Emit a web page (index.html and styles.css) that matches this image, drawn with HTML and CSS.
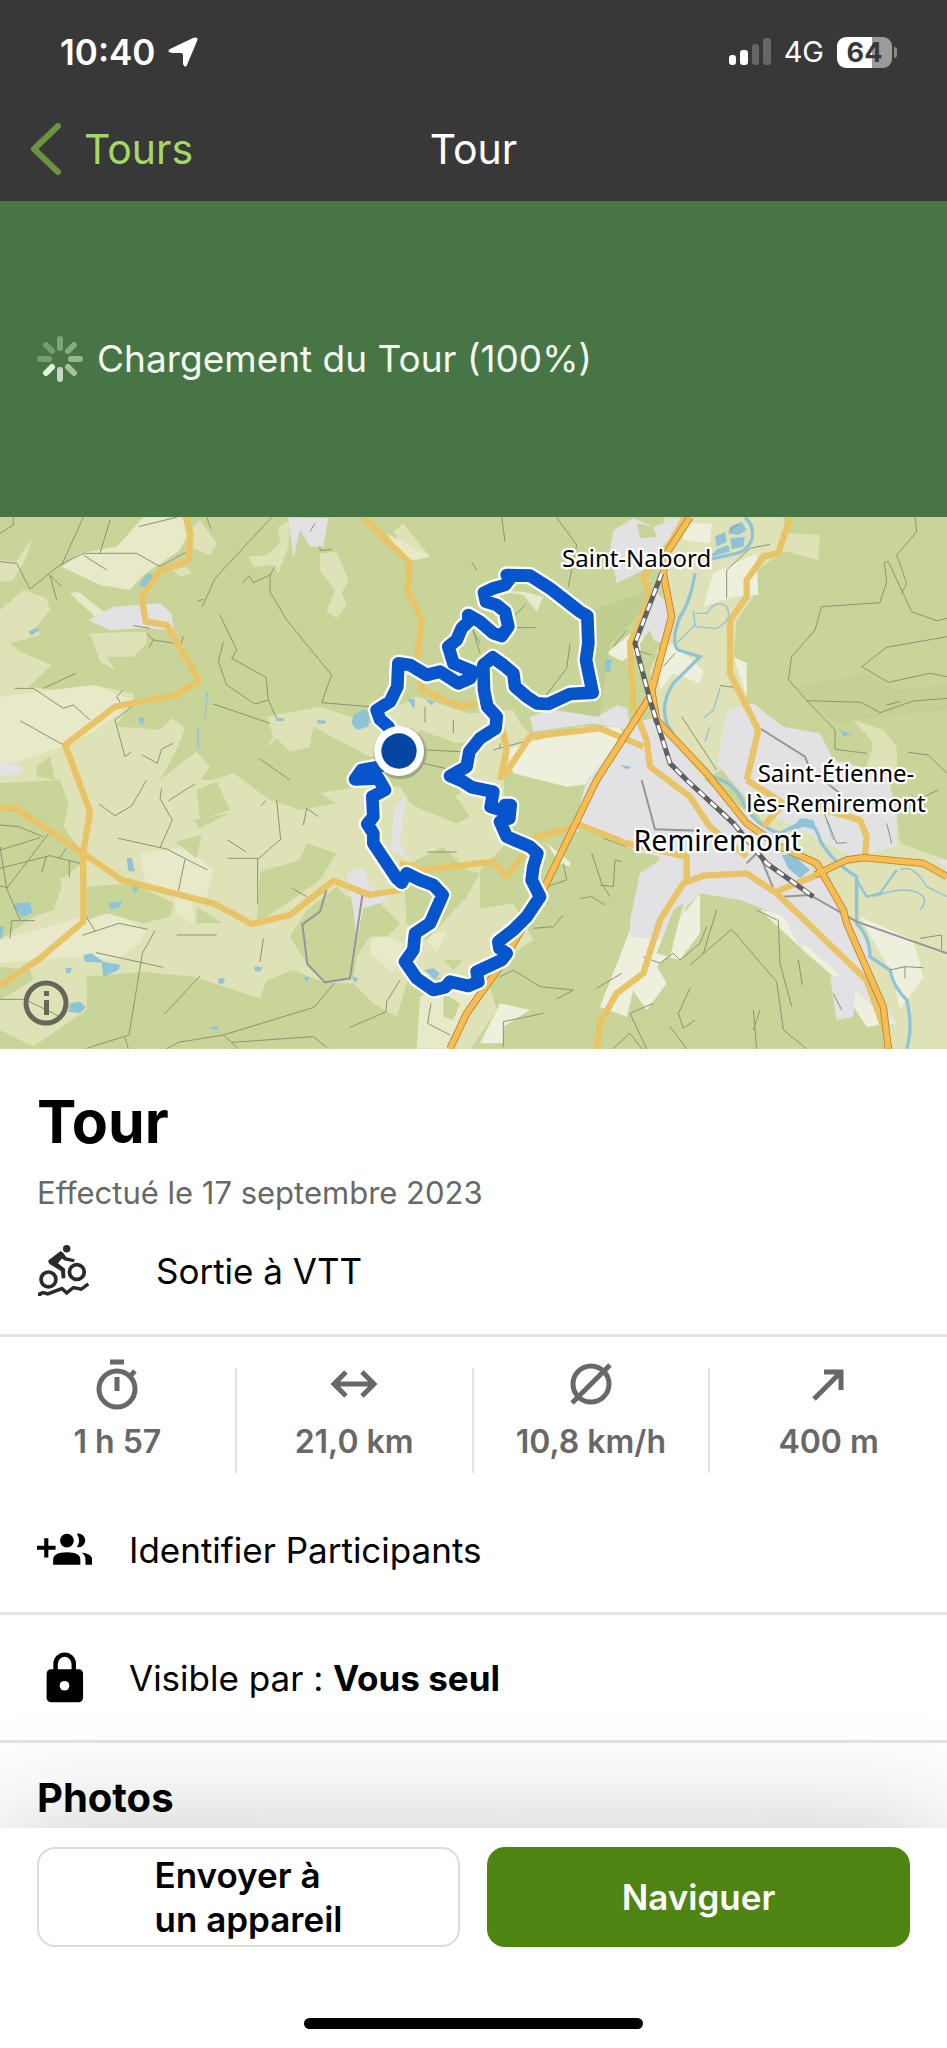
FILE: index.html
```html
<!DOCTYPE html>
<html lang="fr">
<head>
    <meta charset="UTF-8">
    <meta name="viewport" content="width=device-width, initial-scale=1.0">
    <title>Tour</title>
    <link rel="stylesheet" href="styles.css">
</head>
<body>
    <header class="header">
        <div class="status-bar">
            <div class="status-left">
                <span class="time">10:40</span>
                <svg class="location-icon" viewBox="0 0 30 30"><path d="M29 4 19 28Q17 32 15 27V18Q15 16 13 16H4Q-2 15 2 12L25 1Q31-1 29 4Z" fill="#fff"/></svg>
            </div>
            <div class="status-right">
                <svg class="signal-icon" viewBox="0 0 42 28">
                    <rect x="0" y="17" width="7" height="10" rx="3" fill="#fff"/>
                    <rect x="11" y="12" width="8" height="15" rx="3" fill="#fff"/>
                    <rect x="23" y="6" width="7" height="21" rx="3" fill="#666"/>
                    <rect x="34" y="0" width="8" height="27" rx="3" fill="#666"/>
                </svg>
                <span class="network">4G</span>
                <span class="battery">64</span>
            </div>
        </div>
        <nav class="nav-bar">
            <a class="back-link" href="#">
                <svg class="back-icon" viewBox="0 0 32 52"><path d="M28 3 4 26 28 49" fill="none" stroke="#6b9440" stroke-width="6" stroke-linecap="round" stroke-linejoin="round"/></svg>
                Tours
            </a>
            <span class="nav-title">Tour</span>
        </nav>
    </header>

    <div class="loading">
        <svg class="spinner" viewBox="-23 -23 46 46" stroke="#e4f5e0" stroke-width="6" stroke-linecap="round">
            <path d="M0-11V-20" opacity=".35"/>
            <path d="M8-8 14-14" opacity=".4"/>
            <path d="M11 0H20" opacity=".5"/>
            <path d="M8 8 14 14" opacity=".6"/>
            <path d="M0 11V20" opacity=".8"/>
            <path d="M-8 8-14 14"/>
            <path d="M-11 0H-20" opacity=".3"/>
            <path d="M-8-8-14-14" opacity=".3"/>
        </svg>
        <span>Chargement du Tour (100%)</span>
    </div>

    <div class="map">
        <svg class="map-canvas" viewBox="0 21 2841 1596" preserveAspectRatio="xMidYMid slice">
            <rect y="21" width="2841" height="1596" fill="#c9d598"/>

            <!-- fields, west -->
            <g fill="#dfe2b6">
                <path d="M0 300 70 240 140 265 150 300 110 350 120 375 30 400 60 425 155 465 85 530 160 540 280 525 400 550 405 570 345 650 430 655 480 660 515 625 555 655 530 720 480 810 590 725 630 770 600 810 640 810 700 790 810 870 900 900 1010 880 960 850 1050 835 1120 830 1200 830 1230 880 1310 910 1300 860 1440 850 1440 1040 1200 1060 1380 1050 1440 1080V1420L1230 1390 1190 1520 1120 1480 1060 1420 980 1420 880 1380 800 1410 780 1465 580 1400 430 1385 260 1400 260 1500 100 1610 0 1560Z"/>
                <path d="M270 370 440 365 440 400 400 440 320 440 345 480 300 455Z"/>
                <path d="M960 130 1010 125 1045 210 1025 250 1040 285 1010 325 980 305 1005 240 960 180Z"/>
                <path d="M870 30 865 110 835 190 820 165 760 170 745 140 800 135 840 100 835 50Z"/>
                <path d="M1180 65 1210 40 1290 140 1230 150Z"/>
                <path d="M0 150 50 155 95 85 80 140 40 210 0 215Z"/>
                <path d="M600 30 650 100 630 135 580 115 560 70Z"/>
                <path d="M520 180 560 170 575 190 540 200Z"/>
                <path d="M800 620 960 590 1110 640 1150 610 1250 560 1440 620 1440 690 1370 700 1260 660 1200 740 1110 740 940 650 930 710 870 725 830 685 800 715 820 680Z"/>
                <path d="M1410 610 1540 600 1560 640 1620 700 1510 790 1520 1000 1440 1080H1380V820Z"/>
                <path d="M1420 1200 1540 1180 1600 1290 1420 1410Z"/>
                <path d="M1420 1400 1470 1430 1490 1500 1410 1620H1340Z"/>
            </g>
            <g fill="#e7e9c8">
                <path d="M185 170 240 130 350 110 430 22H550L560 80 540 120 430 195 390 240 300 225Z"/>
                <path d="M0 560 120 545 280 525 400 570 290 660 190 710 0 770Z"/>
                <path d="M0 1290 250 1220 330 1200 440 1260 420 1300 350 1350 200 1340 0 1360Z"/>
                <path d="M420 1030 560 1010 640 1080 620 1160 560 1170 440 1140Z"/>
                <path d="M210 250 235 245 330 320 290 325Z"/>
                <path d="M1120 1260 1210 1300 1180 1390 1110 1330Z"/>
                <path d="M1260 1460 1320 1430 1430 1440 1340 1616H1250Z"/>
                <path d="M1470 240 1570 245 1630 260 1610 305 1570 255Z"/>
                <path d="M1270 1280 1340 1260 1310 1330Z"/>
                <path d="M520 1160 575 1170 585 1245 530 1210Z"/>
                <path d="M1160 70 1290 140 1220 155Z"/>
            </g>
            <!-- woods inside the fields -->
            <g fill="#c9d598">
                <path d="M0 900 0 820 180 810 205 880 190 950 240 1020 250 1060 180 1110 185 1130 160 1200 100 1220 0 1290Z"/>
                <path d="M260 1130 400 1120 520 1180 510 1220 430 1240 320 1210 260 1230Z"/>
                <path d="M780 1085 900 1050 920 1000 1010 1030 960 1110 860 1180 770 1240Z"/>
                <path d="M525 995 605 975 590 1045Z"/>
                <path d="M580 930 690 910 600 955Z M590 840 650 815 690 900 600 930Z"/>
                <path d="M590 1190 670 1240 590 1240Z"/>
                <path d="M870 1280 920 1200 1010 1130 1040 1160 1110 1150 1200 1240 1160 1280 1110 1280 1070 1340 1060 1400 980 1415 925 1370Z"/>
                <path d="M1230 830 1340 820 1410 920 1370 940 1270 900 1230 880Z"/>
                <path d="M1210 1070 1330 1010 1400 1080 1440 1090 1400 1160 1280 1290 1220 1240Z"/>
                <path d="M0 1370 90 1380 100 1410 0 1470Z"/>
                <path d="M110 770 150 740 165 810 110 800Z"/>
                <path d="M1330 1350 1390 1350 1360 1380Z M1330 1450 1380 1480 1360 1530 1330 1520Z"/>
            </g>

            <!-- valley, east -->
            <g fill="#dfe2b6">
                <path d="M1990 22H2350L2360 120 2270 180 2260 260 2210 330 2200 450 2240 500 2240 590 2180 620 2200 760 2110 810 2030 740 1960 600 1950 480 2020 330 2000 200Z"/>
                <path d="M2360 70 2460 75 2455 150 2340 120Z"/>
                <path d="M2240 870 2380 890 2500 900 2690 920 2700 1000 2841 1050V1616H2680L2600 1400 2480 1150 2380 1060Z"/>
                <path d="M2560 630 2650 660 2690 710 2690 800 2600 770 2620 700Z"/>
                <path d="M2140 22 2180 22 2130 90 2060 90Z"/>
            </g>
            <g fill="#efefdd">
                <path d="M1880 380 2000 270 1990 360 1880 460 1820 430Z"/>
                <path d="M1970 420 2020 400 2110 480 2100 520 2020 490 1980 540Z"/>
                <path d="M2050 40 2135 40 2130 100 2050 90Z"/>
                <path d="M2140 190 2270 130 2275 255 2200 260 2110 290Z"/>
                <path d="M2200 440 2240 460 2240 560Z"/>
                <path d="M1520 720 1740 650 1860 650 1900 740 1860 810 1700 830 1540 790Z"/>
                <path d="M1890 1260 2060 1200 2100 1150 2100 1270 2040 1350 2000 1340 1900 1440 1880 1520 1800 1490Z"/>
                <path d="M1840 1410 1960 1350 2000 1420 1940 1500 1870 1400Z"/>
                <path d="M2280 1200 2360 1210 2510 1370 2630 1500 2690 1540 2600 1550 2500 1400 2420 1330Z"/>
                <path d="M2580 1220 2740 1290 2770 1400 2700 1500 2680 1400Z"/>
                <path d="M1500 1480 1590 1500 1510 1550 1510 1600 1440 1600Z"/>
                <path d="M1640 1000 1740 1080 1680 1060Z"/>
            </g>
            <g fill="#e2e1e3">
                <path d="M1840 60 1900 25 1960 50 2040 22 2010 120 1950 170 1850 220 1830 120Z"/>
                <path d="M1960 240 2020 290 1990 400 1920 380Z"/>
                <path d="M1760 810 1860 690 1890 640 1980 620 2100 800 2300 950 2400 1040 2480 1130 2500 1180 2500 1280 2400 1310 2350 1220 2220 1170 2100 1150 2060 1190 2000 1290 1890 1280 1890 1210 1920 1080 1980 1040 1890 1020 1720 960Z"/>
                <path d="M1590 620 1660 595 1790 620 1880 570 1890 660 1780 640 1600 665Z"/>
                <path d="M2180 600 2260 580 2350 650 2460 670 2500 750 2660 790 2690 900 2690 1010 2560 1040 2400 960 2250 880 2150 760Z"/>
                <path d="M2340 1160 2500 1160 2600 1300 2620 1410 2690 1540 2630 1500 2480 1360 2400 1290Z"/>
                <path d="M2490 1400 2570 1390 2560 1520 2510 1530Z"/>
                <path d="M340 290 480 280 515 310 520 360 430 355 330 360 265 330Z"/>
                <path d="M865 22 985 25 970 110 930 110 900 60 880 145Z"/>
                <path d="M0 755 70 770 60 790 0 800Z"/>
                <path d="M1040 1090 1090 1070 1110 1130 1170 1170 1090 1195 1070 1290 1060 1200Z"/>
                <path d="M1185 890 1220 850 1200 1000 1230 1050 1170 1020Z"/>
                <path d="M2800 1045 2841 1050V1075Z"/>
            </g>
            <g fill="#bdca8d">
                <path d="M1780 300 1980 230 1900 330 1830 400 1800 620 1660 600 1770 560Z" opacity=".8"/>
                <path d="M2380 530 2600 490 2690 540 2841 520V600L2640 620 2500 640Z" opacity=".35"/>
            </g>
            <g fill="#c9d598">
                <path d="M1740 950 1880 1010 1980 1050 1920 1090 1890 1230 1790 1300 1700 1100Z"/>
                <path d="M2050 1180 2010 1340 1970 1330 2020 1200Z"/>
                <path d="M1870 450 1920 430 1890 600 1820 570Z"/>
                <path d="M1910 40 1960 50 1970 80 1920 85Z"/>
                <path d="M1970 420 1950 360 1920 400 1930 530Z"/>
            </g>

            <!-- water -->
            <g fill="#8fc4d8">
                <path d="M425 210 445 190 460 195 440 230 418 230Z M85 365 110 352 118 360 95 377Z M420 620 432 625 430 645 415 635Z"/>
                <path d="M830 623 852 624 850 633 828 632Z M950 630 978 632 975 642 952 640Z M1060 615 1090 598 1110 605 1105 650 1070 660 1055 640Z"/>
                <path d="M1222 568 1245 568 1243 598Z M1275 568 1303 575 1295 586Z"/>
                <path d="M380 1045 395 1043 405 1085 385 1083Z M325 1180 365 1172 360 1190 330 1200Z M395 1130 420 1128 405 1150Z"/>
                <path d="M45 1180 90 1177 98 1210 65 1222 40 1190Z M0 1250 12 1250 5 1285H0Z"/>
                <path d="M250 1335 275 1330 310 1355 360 1365 355 1380 310 1400 305 1358 255 1355Z M210 1480 240 1475 258 1492 240 1510 205 1505Z"/>
                <path d="M195 1375 215 1373 212 1390 200 1390Z M655 1405 675 1405 670 1422 655 1420Z M762 1370 788 1372 780 1385 765 1382Z M625 1555 655 1547 650 1560Z M1055 1400 1075 1405 1065 1420Z M912 1400 930 1402 920 1418Z"/>
                <path d="M1272 1380 1300 1375 1320 1390 1305 1408Z"/>
                <path d="M2145 80 2175 65 2180 95 2150 110Z M2190 50 2225 35 2240 60 2215 75 2185 70Z M2190 85 2235 80 2230 110 2195 118Z M2150 118 2185 105 2190 125 2130 140Z"/>
                <path d="M2345 1035 2380 1035 2430 1080 2400 1105 2365 1075Z"/>
                <path d="M2400 925 2440 930 2450 960 2410 950 2370 965Z M1815 445 1835 450 1830 490 1815 480Z M1860 765 1895 770 1880 778Z M2520 660 2555 672 2530 680Z"/>
            </g>
            <g fill="none" stroke="#8fc4d8" stroke-width="10">
                <path d="M2235 22Q2265 50 2255 90 2240 125 2210 130L2120 150"/>
                <path d="M2085 190Q2070 280 2040 320 2010 400 2035 420L2100 440 2020 520Q1980 580 2000 640 2060 750 2130 800 2200 810 2230 880 2270 950 2340 970L2420 930Q2450 950 2460 990 2490 1050 2570 1100V1240Q2610 1280 2610 1340L2670 1380Q2680 1430 2720 1470 2740 1550 2720 1616"/>
                <path d="M2570 1110 2600 1160 2640 1150 2690 1080" stroke-width="7"/>
                <path d="M2620 1160Q2730 1120 2770 1160 2780 1180 2760 1200M2700 1080Q2740 1060 2780 1130L2841 1160M2480 930 2500 990" stroke-width="4"/>
                <path d="M2080 300 2085 350 2150 355Q2200 330 2180 290 2150 265 2120 310L2090 310M2090 340 2030 400M2160 535 2140 600 2110 625M2130 650 2115 695M622 545 615 625M595 655V715" stroke-width="4"/>
            </g>

            <!-- paths and small roads -->
            <g fill="none" stroke="#8d9275" stroke-width="3">
                <path d="M0 155 50 160 90 237 180 165 250 130H410L480 170 560 125M250 22 185 165M330 30 300 130M150 195 170 270M150 195 185 230M250 135 320 180M415 50 530 22M40 22V45L0 70"/>
                <path d="M815 22 645 205 607 290M595 272 612 268M620 22 633 57M825 170 810 195V245L860 330 995 495 965 578 1110 590M727 220 747 197 760 218 810 195"/>
                <path d="M660 315 710 420 695 445 798 502 805 570 830 625M670 395 655 455 680 525 765 582 805 570M640 582 810 640M45 535H100L190 595 220 585 270 630M130 535 228 490M60 632 190 705M395 590 345 630 375 740 393 727M370 540 350 560 362 580M427 735 472 760 485 717 520 700M400 347 450 355M440 370 460 390 525 400M460 390 447 412M550 378 540 410M780 747 870 810M960 110V122L995 118M930 65 945 40"/>
                <path d="M0 945 55 950 130 980M0 1075 150 1037 240 1060M145 972 20 1135M0 1020 120 983M0 1010 20 1135 60 1230M0 1128 22 1133M30 1285 35 1232H105M208 1050V1103M140 1037 125 1087M200 1013 180 1043"/>
                <path d="M297 882 345 917 395 888 440 810M485 835 480 865 517 930 480 1013M355 985 500 1017 622 1080M555 1048 535 1143M505 872 585 822M683 990 740 1027M683 1045H773V1180M773 1048 842 988 830 870M247 1276 357 1240 443 1258M257 1218 285 1262M465 1262 427 1330 387 1575 260 1615M530 1275H650M288 1328 490 1372M600 1398 493 1512M790 1285 780 1355M1005 1418 942 1492 670 1575 535 1597 500 1616M670 1575 715 1616M695 1597 940 1580 980 1612M1200 1410 1160 1475 1158 1505 1050 1552M877 1135 920 1160M0 1468H75L180 1520M1280 1026H1370M910 945 920 895 955 920M783 888 797 872M375 1582 385 1616M1293 1480 1283 1540 1350 1575"/>
                <path d="M1505 22 1515 95M1670 22 1730 105 1705 230M1410 345 1440 400M1410 330 1440 430M1540 320 1575 285M1550 353H1607M1710 400 1700 475 1635 560M1430 180 1415 155M1280 720 1440 728M1270 760 1400 790M1275 590V638M1360 630V670M1840 410 1880 360M1905 420 1955 435M1990 470 2025 430"/>
                <path d="M2180 265V180L2250 115 2310 103M2190 60 2215 42M2745 22 2750 65 2690 135 2720 220 2705 250M2653 157 2660 215 2640 278 2465 290 2445 360 2375 440 2365 508 2420 572 2505 660V718L2600 730M2653 157 2665 155 2735 305 2810 332 2841 325M2841 380 2660 412 2585 470 2665 517 2790 490 2841 500M2420 572 2585 577 2640 608 2740 573 2841 565M2700 575 2660 585M2725 727 2785 735 2841 790M2160 527 2205 532M2045 620 2150 780M1480 720 1590 690M1500 715V700"/>
                <path d="M1775 1030 1805 1120 1830 1160M1810 985 1880 1010M1800 1125 1840 1130 1845 1050 1865 1055M1740 1165 1775 1160 1815 1185M1640 1130 1700 1110 1690 1060M1600 1255 1660 1250 1690 1215M1930 1340 1980 1360 2020 1330 2040 1350 2100 1300 2120 1250M2070 1365 2195 1258 2330 1415 2350 1560 2420 1616M2270 1200 2335 1232 2340 1360 2375 1490M2395 1350 2407 1425M1500 1400 1540 1380 1620 1430 1720 1440 1670 1467M1510 1610V1535L1630 1510M1790 1435 1865 1390M1960 1480 1890 1510 1940 1616M2070 1435 2035 1510 2050 1555 2085 1530M2010 1550 2060 1616M2260 1500 2270 1616M2280 1500 2260 1560M1840 1616 1890 1570 1925 1616M2500 1450 2525 1500M2150 1200 2110 1330M2715 1405V1370L2770 1373M2670 1380 2715 1370M2760 1285 2825 1275V1320M2460 880 2510 1000 2540 998M2675 1000 2660 940M2750 870 2815 840"/>
            </g>
            <g fill="none" stroke="#96959a" stroke-width="6">
                <path d="M980 1137 960 1205 907 1243 922 1362 975 1417 1050 1405 1088 1150"/>
                <path d="M1925 810 1965 958 2100 962M2280 1020 2240 1060M2285 1050 2320 1135M2345 1160 2430 1155 2570 1235 2841 1330M2280 655 2415 740 2430 780 2520 850"/>
            </g>

            <!-- secondary roads -->
            <g fill="none" stroke="#e9c466" stroke-width="19" stroke-linejoin="round">
                <path d="M557 22 572 70 565 150 480 185 425 260 437 335 500 345 597 510 530 555 345 590 195 705 235 810 270 905 250 1030V1235L120 1345 0 1427"/>
                <path d="M0 892 50 897 250 1030 365 1110 560 1160 640 1180 755 1242 870 1215 1000 1112 1110 1155 1200 1140"/>
                <path d="M1090 22 1230 160 1222 240 1265 330 1250 450 1265 540 1380 590 1440 580 1500 620 1520 720 1500 810"/>
                <path d="M1200 1060 1270 1080 1480 1055 1520 1100 1570 1035M1600 985 1740 945 1880 1000 2060 1040V1120"/>
                <path d="M1510 800 1590 680 1800 655 1930 710"/>
                <path d="M2055 22 2010 100 1930 200 1950 260 1890 400 1900 590 1940 690 1950 770 2070 860 2130 950 2240 1040"/>
                <path d="M2370 22 2335 130 2290 140 2240 210V260L2190 330V490L2275 660 2240 810"/>
                <path d="M2240 810 2350 880 2290 950M2350 880 2440 890 2580 930 2600 980 2595 1040"/>
                <path d="M1790 1616 1800 1540 1850 1450 1930 1390 1980 1230 2050 1120 2110 1097 2240 1090 2330 1150 2600 1410 2650 1550"/>
                <path d="M2330 1145 2450 1095"/>
            </g>

            <!-- main roads: casing, then fill -->
            <g fill="none" stroke-linejoin="round">
                <g stroke="#b5822d" stroke-width="22">
                    <path d="M2070 22 2000 130 1990 190 2015 320 1950 560 1790 810 1610 1180 1500 1370 1400 1510 1350 1616"/>
                    <path d="M1950 510 1970 630 2120 790 2240 940 2340 1010 2450 1060 2530 1200 2540 1240 2650 1490 2665 1616"/>
                    <path d="M2445 1095 2540 1050 2590 1043 2770 1060 2841 1100"/>
                </g>
                <g stroke="#f7bd52" stroke-width="17">
                    <path d="M2070 22 2000 130 1990 190 2015 320 1950 560 1790 810 1610 1180 1500 1370 1400 1510 1350 1616"/>
                    <path d="M1950 510 1970 630 2120 790 2240 940 2340 1010 2450 1060 2530 1200 2540 1240 2650 1490 2665 1616"/>
                    <path d="M2445 1095 2540 1050 2590 1043 2770 1060 2841 1100"/>
                </g>
            </g>

            <!-- railway -->
            <g fill="none">
                <path d="M1985 190 1905 400 1950 570 2010 760 2060 810 2200 940 2300 1060 2440 1160" stroke="#5f5f5f" stroke-width="15"/>
                <path d="M1985 190 1905 400 1950 570 2010 760 2060 810 2200 940 2300 1060 2440 1160" stroke="#fff" stroke-width="9" stroke-dasharray="24 24"/>
            </g>

            <!-- recorded route -->
            <defs>
                <path id="route" d="M1198 722 1165 650 1140 628 1130 600 1170 575 1192 530 1195 460 1230 465 1280 495 1320 485 1375 520 1410 505 1420 485 1360 460 1345 410 1370 390 1385 355 1405 335 1405 315 1440 335 1480 370 1505 378 1525 350 1515 305 1490 285 1458 275 1452 248 1480 235 1515 225 1530 205 1520 195 1590 197 1650 235 1740 305 1762 318 1765 400 1758 450 1778 548 1710 552 1645 582 1610 580 1580 560 1545 530 1540 490 1510 465 1478 442 1450 465 1452 540 1462 590 1490 620 1487 655 1440 685 1408 725 1400 770 1350 798 1390 815 1415 832 1480 845 1472 890 1510 903 1515 885 1532 885 1528 925 1500 935 1520 980 1590 1010 1612 1030 1600 1070 1595 1110 1620 1160 1580 1220 1540 1260 1495 1295 1498 1315 1520 1330 1505 1350 1430 1385 1435 1415 1405 1428 1350 1415 1335 1432 1300 1440 1250 1405 1215 1355 1240 1320 1245 1270 1290 1240 1310 1195 1328 1155 1300 1125 1260 1110 1220 1090 1205 1118 1190 1105 1120 1000V970L1102 942 1120 920 1117 860 1155 840 1135 805 1065 808 1085 780 1140 770 1198 722"/>
            </defs>
            <use class="route-outline" href="#route"/>
            <use class="route-line" href="#route"/>
            <circle cx="1200" cy="728" r="80" fill="#555" opacity=".35"/>
            <circle cx="1197" cy="723" r="75" fill="#fff"/>
            <circle cx="1197" cy="723" r="53" fill="#0646a3"/>

            <g class="map-labels">
                <text x="1910" y="171">Saint-Nabord</text>
                <text x="2508" y="816">Saint-Étienne-</text>
                <text x="2508" y="906">lès-Remiremont</text>
                <text class="town" x="2152" y="1022">Remiremont</text>
            </g>
        </svg>
        <button class="info-btn" aria-label="Informations sur la carte">
            <svg viewBox="0 0 46 46"><circle cx="23" cy="23" r="20" fill="none" stroke="#67665a" stroke-width="5"/><path d="M21 11h5v5h-5zM21 20h5v15h-5z" fill="#67665a"/></svg>
        </button>
    </div>

    <main class="content">
        <section class="summary">
            <h1 class="title">Tour</h1>
            <p class="date">Effectué le 17 septembre 2023</p>
            <div class="sport">
                <svg class="sport-icon" viewBox="120 552 152 160" fill="none" stroke="#2b2b2b">
                    <circle cx="204" cy="566" r="11" fill="#2b2b2b" stroke="none"/>
                    <circle cx="150" cy="657" r="22" stroke-width="11"/>
                    <circle cx="234" cy="635" r="22" stroke-width="11"/>
                    <path d="M150 600 186 573 194 579 203 591 228 597 225 606 198 601 190 595 178 609 199 625 200 653 189 654 187 632 153 611Q148 606 150 600Z" fill="#2b2b2b" stroke="none"/>
                    <path d="M124 706V700L134 696 148 700 190 684 204 697 224 681 247 686 268 670" stroke-width="10"/>
                </svg>
                <span>Sortie à VTT</span>
            </div>
        </section>

        <section class="stats">
            <div class="stat">
                <svg class="stat-icon" viewBox="0 0 48 54" fill="none" stroke="#686868" stroke-width="5">
                    <circle cx="24" cy="32" r="18"/><path d="M17 5H31M24 20V34M37 19 42 14"/>
                </svg>
                <span>1 h 57</span>
            </div>
            <div class="stat">
                <svg class="stat-icon" viewBox="0 0 48 54" fill="none" stroke="#686868" stroke-width="5">
                    <path d="M5 27H43M16 15 4 27 16 39M32 15 44 27 32 39"/>
                </svg>
                <span>21,0 km</span>
            </div>
            <div class="stat">
                <svg class="stat-icon" viewBox="0 0 48 54" fill="none" stroke="#686868" stroke-width="5">
                    <circle cx="24" cy="27" r="18"/><path d="M5 46 43 8"/>
                </svg>
                <span>10,8 km/h</span>
            </div>
            <div class="stat">
                <svg class="stat-icon" viewBox="0 0 48 54" fill="none" stroke="#686868" stroke-width="5">
                    <path d="M9 42 36 15M19 15H36V33"/>
                </svg>
                <span>400 m</span>
            </div>
        </section>

        <a class="row" href="#">
            <svg class="row-icon" viewBox="106 95 160 160">
                <path d="M127 142h12v22h21v12h-21v22h-12v-22h-21v-12h21z"/>
                <circle cx="193" cy="149" r="20"/>
                <path d="M222 129a20 20 0 1 1 0 39q13-19 0-39z"/>
                <path d="M153 219v-14q0-22 40-22t39 22v14z"/>
                <path d="M236 184q31 4 31 22v13h-20v-14q0-13-11-21z"/>
            </svg>
            <span>Identifier Participants</span>
        </a>
        <a class="row" href="#">
            <svg class="row-icon" viewBox="106 484 160 160">
                <rect x="134" y="540" width="106" height="96" rx="13"/>
                <path d="M160 545v-20a26 27 0 0 1 53 0v20" fill="none" stroke="#000" stroke-width="13"/>
                <circle cx="186" cy="588" r="14" fill="#fff"/>
            </svg>
            <span>Visible par : <strong>Vous seul</strong></span>
        </a>
        <h2 class="photos-title">Photos</h2>
    </main>

    <footer class="bottom-bar">
        <div class="actions">
            <button class="btn"><span>Envoyer à<br>un appareil</span></button>
            <button class="btn btn-primary">Naviguer</button>
        </div>
        <div class="home-indicator"></div>
    </footer>
</body>
</html>
```
FILE: styles.css
```css
* {
    box-sizing: border-box;
}

body {
    margin: 0;
    min-height: 100vh;
    display: flex;
    flex-direction: column;
    background-color: #fff;
    color: #000;
    font-family: Inter, "Liberation Sans", sans-serif;
    font-size: 35px;
    line-height: 44px;
    overflow-x: hidden;
}

svg {
    display: block;
    flex-shrink: 0;
}

/* Header */
.header {
    background-color: #383838;
    color: #fff;
}

.status-bar {
    display: flex;
    justify-content: space-between;
    align-items: center;
    height: 104px;
    padding: 0 55px 0 60px;
}

.status-left,
.status-right {
    display: flex;
    align-items: center;
    gap: 13px;
}

.time {
    font-size: 35px;
    font-weight: 600;
}

.location-icon {
    width: 30px;
    height: 30px;
}

.signal-icon {
    width: 42px;
    height: 28px;
}

.network {
    font-size: 29px;
}

.battery {
    position: relative;
    width: 55px;
    height: 31px;
    border-radius: 9px;
    background: linear-gradient(90deg, #fff 63%, #9b9b9b 63%);
    color: #383838;
    font-size: 27px;
    font-weight: 700;
    line-height: 31px;
    text-align: center;
}

.battery::after {
    content: "";
    position: absolute;
    right: -5px;
    top: 10px;
    width: 3px;
    height: 11px;
    border-radius: 0 3px 3px 0;
    background-color: #8a8a8a;
}

.nav-bar {
    display: grid;
    grid-template-columns: 1fr auto 1fr;
    align-items: center;
    height: 97px;
    padding: 0 30px 8px;
    font-size: 41px;
}

.back-link {
    display: flex;
    align-items: center;
    gap: 22px;
    color: #a4d865;
    text-decoration: none;
}

.back-icon {
    width: 32px;
    height: 52px;
}

/* Loading banner */
.loading {
    display: flex;
    align-items: center;
    gap: 14px;
    height: 316px;
    padding: 0 37px;
    background-color: #487545;
    color: #f2fbef;
    font-size: 37px;
}

.spinner {
    width: 46px;
    height: 46px;
}

/* Map */
.map {
    position: relative;
}

.map-canvas {
    width: 100%;
    height: auto;
}

.route-outline,
.route-line {
    fill: none;
    stroke-linejoin: round;
    stroke-linecap: round;
}

.route-outline {
    stroke: #fff;
    stroke-width: 52px;
}

.route-line {
    stroke: #0755cc;
    stroke-width: 38px;
}

.map-labels {
    font-family: "Noto Sans", sans-serif;
    font-size: 72px;
    text-anchor: middle;
    fill: #000;
    stroke: #fff;
    stroke-width: 14px;
    stroke-linejoin: round;
    paint-order: stroke;
}

.town {
    font-size: 86px;
}

.info-btn {
    position: absolute;
    left: 23px;
    bottom: 23px;
    width: 46px;
    height: 46px;
    padding: 0;
    border: none;
    background: none;
}

/* Tour details */
.summary {
    padding: 35px 37px;
    border-bottom: 3px solid #e3e3e3;
}

.title {
    margin: 0;
    font-size: 59px;
    font-weight: 700;
    line-height: 76px;
}

.date {
    margin: 11px 0 0;
    color: #686868;
    font-size: 31px;
}

.sport {
    display: flex;
    align-items: center;
    gap: 65px;
    margin-top: 28px;
    height: 56px;
}

.sport-icon {
    width: 54px;
    height: 54px;
}

.stats {
    display: grid;
    grid-template-columns: repeat(4, 1fr);
    padding: 31px 0 14px;
}

.stat {
    display: flex;
    flex-direction: column;
    align-items: center;
    height: 105px;
    border-right: 2px solid #e3e3e3;
    color: #686868;
    font-size: 32px;
    font-weight: 600;
}

.stat:last-child {
    border-right: none;
}

.stat-icon {
    width: 48px;
    height: 54px;
    margin: -11px 0 9px;
}

.row {
    display: flex;
    align-items: center;
    gap: 37px;
    height: 128px;
    padding: 0 37px;
    border-bottom: 3px solid #e3e3e3;
    color: #000;
    text-decoration: none;
}

.row-icon {
    width: 55px;
    height: 55px;
}

.row strong {
    font-weight: 700;
}

.photos-title {
    margin: 0;
    padding: 31px 37px 6px;
    font-size: 40px;
    font-weight: 700;
    line-height: 48px;
}

/* Bottom bar */
.bottom-bar {
    position: sticky;
    bottom: 0;
    margin-top: auto;
    padding: 19px 37px;
    background-color: #fff;
    box-shadow: 0 0 120px rgba(0, 0, 0, 0.22);
}

.actions {
    display: grid;
    grid-template-columns: 1fr 1fr;
    gap: 27px;
}

.btn {
    display: flex;
    align-items: center;
    justify-content: center;
    height: 100px;
    padding: 0;
    border: 2px solid #dcdcdc;
    border-radius: 18px;
    background-color: #fff;
    color: #000;
    font-family: inherit;
    font-size: 35px;
    font-weight: 600;
    line-height: 44px;
    text-align: left;
    cursor: pointer;
}

.btn-primary {
    border: none;
    background-color: #4e8512;
    color: #fff;
}

.home-indicator {
    width: 339px;
    height: 11px;
    margin: 71px auto 0;
    border-radius: 6px;
    background-color: #000;
}
```
